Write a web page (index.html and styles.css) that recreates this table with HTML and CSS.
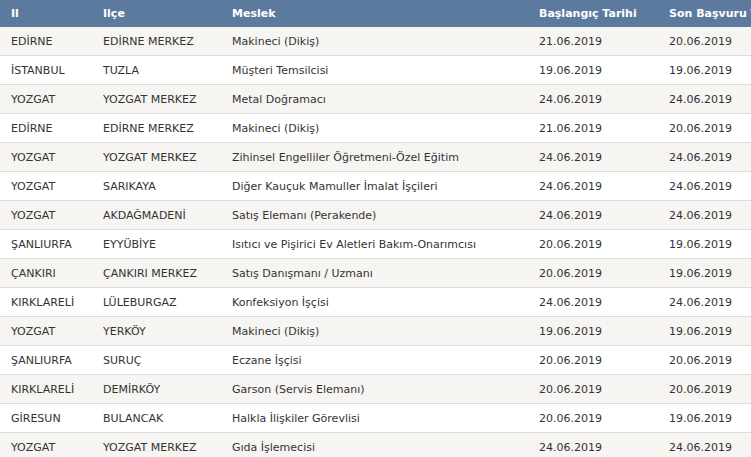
FILE: index.html
```html
<!DOCTYPE html>
<html lang="tr">
<head>
<meta charset="utf-8">
<link rel="stylesheet" href="styles.css">
</head>
<body>
<table class="jobs">
<colgroup>
<col class="c1"><col class="c2"><col class="c3"><col class="c4"><col class="c5">
</colgroup>
<thead>
<tr><th>Il</th><th>Ilçe</th><th>Meslek</th><th>Başlangıç Tarihi</th><th>Son Başvuru Tarihi</th></tr>
</thead>
<tbody>
<tr><td>EDİRNE</td><td>EDİRNE MERKEZ</td><td>Makineci (Dikiş)</td><td>21.06.2019</td><td>20.06.2019</td></tr>
<tr><td>İSTANBUL</td><td>TUZLA</td><td>Müşteri Temsilcisi</td><td>19.06.2019</td><td>19.06.2019</td></tr>
<tr><td>YOZGAT</td><td>YOZGAT MERKEZ</td><td>Metal Doğramacı</td><td>24.06.2019</td><td>24.06.2019</td></tr>
<tr><td>EDİRNE</td><td>EDİRNE MERKEZ</td><td>Makineci (Dikiş)</td><td>21.06.2019</td><td>20.06.2019</td></tr>
<tr><td>YOZGAT</td><td>YOZGAT MERKEZ</td><td>Zihinsel Engelliler Öğretmeni-Özel Eğitim</td><td>24.06.2019</td><td>24.06.2019</td></tr>
<tr><td>YOZGAT</td><td>SARIKAYA</td><td>Diğer Kauçuk Mamuller İmalat İşçileri</td><td>24.06.2019</td><td>24.06.2019</td></tr>
<tr><td>YOZGAT</td><td>AKDAĞMADENİ</td><td>Satış Elemanı (Perakende)</td><td>24.06.2019</td><td>24.06.2019</td></tr>
<tr><td>ŞANLIURFA</td><td>EYYÜBİYE</td><td>Isıtıcı ve Pişirici Ev Aletleri Bakım-Onarımcısı</td><td>20.06.2019</td><td>19.06.2019</td></tr>
<tr><td>ÇANKIRI</td><td>ÇANKIRI MERKEZ</td><td>Satış Danışmanı / Uzmanı</td><td>20.06.2019</td><td>19.06.2019</td></tr>
<tr><td>KIRKLARELİ</td><td>LÜLEBURGAZ</td><td>Konfeksiyon İşçisi</td><td>24.06.2019</td><td>24.06.2019</td></tr>
<tr><td>YOZGAT</td><td>YERKÖY</td><td>Makineci (Dikiş)</td><td>19.06.2019</td><td>19.06.2019</td></tr>
<tr><td>ŞANLIURFA</td><td>SURUÇ</td><td>Eczane İşçisi</td><td>20.06.2019</td><td>20.06.2019</td></tr>
<tr><td>KIRKLARELİ</td><td>DEMİRKÖY</td><td>Garson (Servis Elemanı)</td><td>20.06.2019</td><td>20.06.2019</td></tr>
<tr><td>GİRESUN</td><td>BULANCAK</td><td>Halkla İlişkiler Görevlisi</td><td>20.06.2019</td><td>19.06.2019</td></tr>
<tr><td>YOZGAT</td><td>YOZGAT MERKEZ</td><td>Gıda İşlemecisi</td><td>24.06.2019</td><td>24.06.2019</td></tr>
</tbody>
</table>
</body>
</html>
```
FILE: styles.css
```css
html, body {
  margin: 0;
  padding: 0;
  background: #fff;
  overflow: hidden;
}
.jobs {
  border-collapse: collapse;
  table-layout: fixed;
  width: 820px;
  font-family: "DejaVu Sans", Verdana, sans-serif;
  font-size: 11px;
  color: #333;
}
.c1 { width: 92px; }
.c2 { width: 129px; }
.c3 { width: 307px; }
.c4 { width: 130px; }
.c5 { width: 162px; }
.jobs th {
  background: #5b7a9d;
  color: #fff;
  font-weight: bold;
  text-align: left;
  height: 27px;
  padding: 0 0 0 11px;
  white-space: nowrap;
  overflow: hidden;
}
.jobs td {
  height: 28px;
  padding: 0 0 0 11px;
  border-bottom: 1px solid #ddd;
  white-space: nowrap;
}
.jobs tbody tr:nth-child(odd) td { background: #f6f5f2; }
.jobs tbody tr:nth-child(even) td { background: #fff; }
```
